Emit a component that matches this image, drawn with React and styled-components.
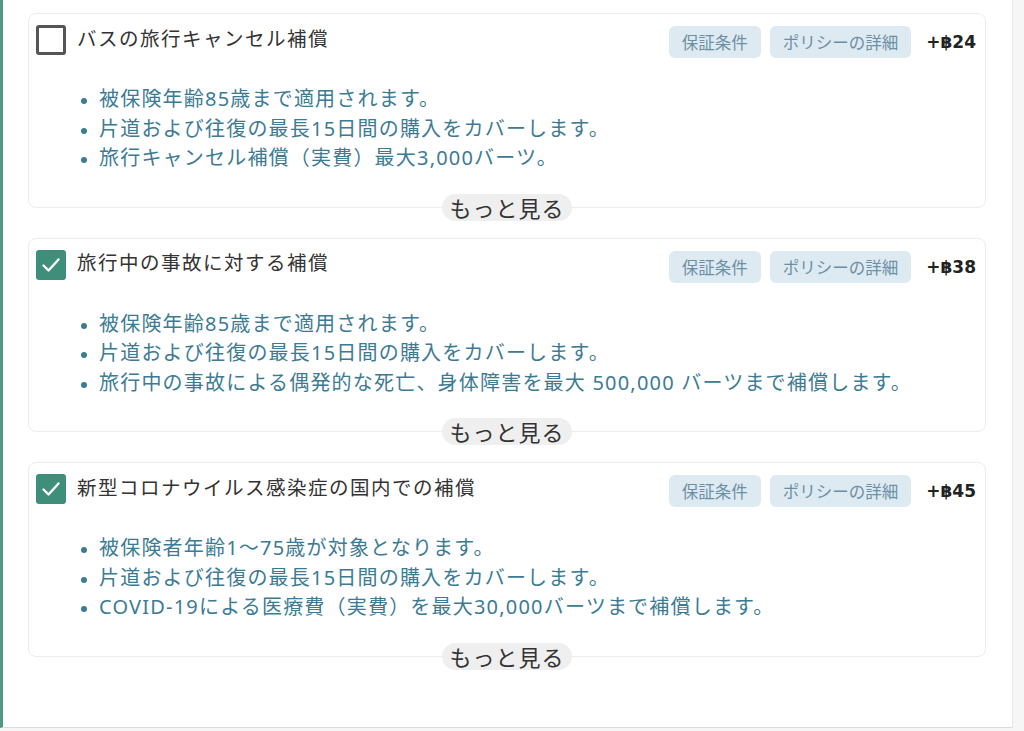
import React from "react";
import styled, { createGlobalStyle } from "styled-components";

const Global = createGlobalStyle`
  html, body { margin: 0; padding: 0; background: #f6f6f6; }
  body { font-family: "Noto Sans", "Noto Sans CJK JP", sans-serif; }
  * { box-sizing: border-box; }
`;

const Panel = styled.div`
  width: 1013px;
  height: 728px;
  background: #fff;
  border-left: 3px solid #4a9a84;
  border-right: 1px solid #e6e6e6;
  border-bottom: 1px solid #dcdcdc;
  padding: 13px 26px 0 25px;
  display: flex;
  flex-direction: column;
  gap: 17px;
  overflow: hidden;
`;

const Section = styled.section`
  display: flex;
  flex-direction: column;
  align-items: center;
`;

const Card = styled.div`
  align-self: stretch;
  border: 1px solid #ececec;
  border-radius: 8px;
  padding: 9px 9px 34px 7px;
`;

const Header = styled.div`
  display: flex;
  align-items: center;
  min-height: 34px;
`;

const Box = styled.span`
  width: 30px;
  height: 30px;
  border-radius: 3px;
  flex: none;
  display: flex;
  align-items: center;
  justify-content: center;
  background: ${(p) => (p.$checked ? "#3f8e7b" : "#fff")};
  border: ${(p) => (p.$checked ? "none" : "3px solid #555")};
`;

const Title = styled.h3`
  margin: 0 0 0 11px;
  font-family: "Noto Sans CJK JP", sans-serif;
  font-weight: 400;
  font-size: 19.5px;
  letter-spacing: 1.5px;
  color: #333;
  flex: 1;
  position: relative;
  top: -3px;
`;

const Badge = styled.span`
  height: 32px;
  padding: 0 13px;
  margin-left: 9px;
  border-radius: 6px;
  background: #deeaf2;
  color: #6c8fa6;
  font-family: "Noto Sans CJK JP", sans-serif;
  font-size: 16.5px;
  display: flex;
  align-items: center;
  position: relative;
  top: 2px;
`;

const Price = styled.span`
  margin-left: 15px;
  font-family: "DejaVu Sans", sans-serif;
  font-weight: 700;
  font-size: 17px;
  color: #222;
  position: relative;
  top: 2px;
`;

const List = styled.ul`
  margin: 27px 0 0;
  padding-left: 63px;
  color: #3c7b93;
  font-family: "Noto Sans", "Noto Sans CJK JP", sans-serif;
  font-size: 20px;
  line-height: 29.5px;
  letter-spacing: 1.2px;
  li::marker { font-size: 16px; }
`;

const More = styled.button`
  margin-top: -14px;
  height: 27px;
  padding: 0 7px;
  border: none;
  border-radius: 14px;
  background: #efefef;
  color: #333;
  font-family: "Noto Sans CJK JP", sans-serif;
  font-size: 22px;
  line-height: 27px;
  letter-spacing: 1px;
  cursor: pointer;
`;

const Check = () => (
  <svg width="22" height="22" viewBox="0 0 22 22">
    <polyline points="3.5,11.5 8.5,16.5 18.5,5.5" fill="none" stroke="#fff" strokeWidth="2.4" strokeLinecap="round" strokeLinejoin="round" />
  </svg>
);

const items = [
  {
    title: "バスの旅行キャンセル補償",
    checked: false,
    price: "+฿24",
    bullets: [
      "被保険年齢85歳まで適用されます。",
      "片道および往復の最長15日間の購入をカバーします。",
      "旅行キャンセル補償（実費）最大3,000バーツ。",
    ],
  },
  {
    title: "旅行中の事故に対する補償",
    checked: true,
    price: "+฿38",
    bullets: [
      "被保険年齢85歳まで適用されます。",
      "片道および往復の最長15日間の購入をカバーします。",
      "旅行中の事故による偶発的な死亡、身体障害を最大 500,000 バーツまで補償します。",
    ],
  },
  {
    title: "新型コロナウイルス感染症の国内での補償",
    checked: true,
    price: "+฿45",
    bullets: [
      "被保険者年齢1〜75歳が対象となります。",
      "片道および往復の最長15日間の購入をカバーします。",
      "COVID-19による医療費（実費）を最大30,000バーツまで補償します。",
    ],
  },
];

export default function App() {
  return (
    <>
      <Global />
      <Panel>
        {items.map((it) => (
          <Section key={it.title}>
            <Card>
              <Header>
                <Box $checked={it.checked}>{it.checked && <Check />}</Box>
                <Title>{it.title}</Title>
                <Badge>保証条件</Badge>
                <Badge>ポリシーの詳細</Badge>
                <Price>{it.price}</Price>
              </Header>
              <List>
                {it.bullets.map((b) => (
                  <li key={b}>{b}</li>
                ))}
              </List>
            </Card>
            <More>もっと見る</More>
          </Section>
        ))}
      </Panel>
    </>
  );
}
